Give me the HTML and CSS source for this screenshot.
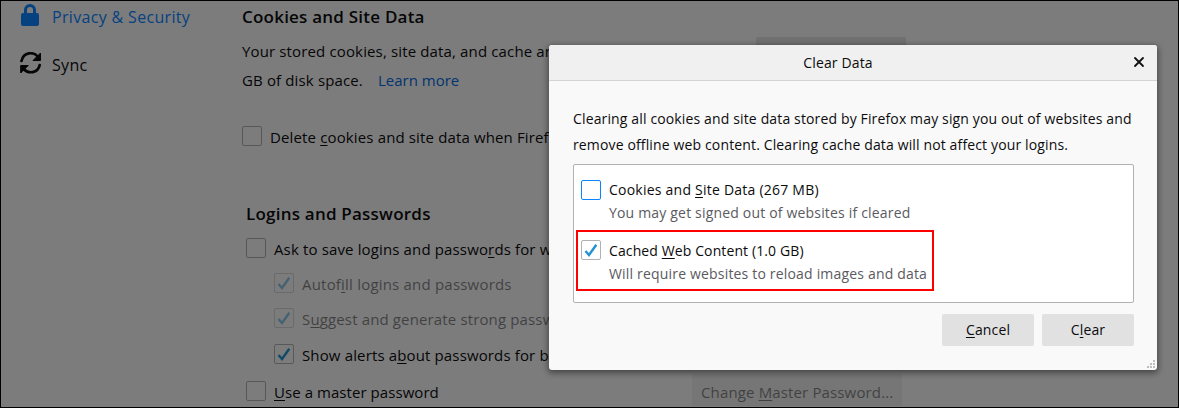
FILE: index.html
```html
<!DOCTYPE html>
<html lang="en">
<head>
<meta charset="utf-8">
<title>Privacy &amp; Security</title>
<link rel="stylesheet" href="styles.css">
</head>
<body>
<div class="page">
  <nav class="sidebar">
    <div class="nav-item active">
      <svg class="nav-icon lock" width="22" height="22" viewBox="-1 0 22 22"><path d="M0 11a2 2 0 0 1 2-2h1V6a6 6 0 0 1 12 0v3h1a2 2 0 0 1 2 2v9a2 2 0 0 1-2 2H2a2 2 0 0 1-2-2zM6 9h6V6a3 3 0 0 0-6 0z" fill="currentColor" fill-rule="evenodd"/></svg>
      <span class="nav-label">Privacy &amp; Security</span>
    </div>
    <div class="nav-item">
      <svg class="nav-icon" width="22" height="22" viewBox="0 0 22 22"><g fill="none" stroke="currentColor" stroke-width="2.7" stroke-linecap="round"><path d="M1.500 9C3.500 0 13.500-.9 18 5"/><path d="M19.700 13C18 21.500 8 22 3.500 17"/></g><path d="M20.500 1v7.500h-7.500zM.700 21v-7.500h7.500z" fill="currentColor" stroke="currentColor" stroke-width="1" stroke-linejoin="round"/></svg>
      <span class="nav-label">Sync</span>
    </div>
  </nav>
  <main class="content">
    <section class="cookies">
      <h2>Cookies and Site Data</h2>
      <div class="storage">
        <div class="storage-text">
          <div>Your stored cookies, site data, and cache are</div>
          <div class="second"><span>GB of disk space.</span><a>Learn more</a></div>
        </div>
        <div class="btn clear-btn"></div>
      </div>
      <div class="check-row delete"><i class="box"></i><span>Delete <u>c</u>ookies and site data when Firef</span></div>
    </section>
    <section class="logins">
      <h2>Logins and Passwords</h2>
      <div class="check-row"><i class="box"></i><span>Ask to save logins and passwo<u>r</u>ds for w</span></div>
      <div class="check-row child disabled r1"><i class="box"><svg width="18" height="18" viewBox="0 0 18 18"><path d="M3.500 10 7 14 14.300 3.800"/></svg></i><span class="t-auto">Autof<u>i</u>ll logins and passwords</span></div>
      <div class="check-row child disabled r2"><i class="box"><svg width="18" height="18" viewBox="0 0 18 18"><path d="M3.500 10 7 14 14.300 3.800"/></svg></i><span>S<u>u</u>ggest and generate strong passw</span></div>
      <div class="check-row child r3"><i class="box"><svg width="18" height="18" viewBox="0 0 18 18"><path d="M3.500 10 7 14 14.300 3.800"/></svg></i><span>Show alerts a<u>b</u>out passwords for b</span></div>
      <div class="master">
        <div class="check-row"><i class="box"></i><span class="t-master"><u>U</u>se a master password</span></div>
        <div class="btn change"><span>Change <u>M</u>aster Password...</span></div>
      </div>
    </section>
  </main>
</div>
<div class="overlay"></div>
<div class="dialog">
  <header class="title"><span>Clear Data</span>
    <svg class="close" width="12" height="12" viewBox="0 0 12 12"><path d="M2 2l8 8M10 2l-8 8" fill="none" stroke="#111" stroke-width="1.800" stroke-linecap="round"/></svg>
  </header>
  <div class="body">
    <div class="message">
      <div>Clearing all cookies and site data stored by Firefox may sign you out of websites and</div>
      <div>remove offline web content. Clearing cache data will not affect your logins.</div>
    </div>
    <div class="list">
      <div class="option first"><i class="box focus"></i><div class="labels"><div class="t-o1">Cookies and <u>S</u>ite Data (267 MB)</div><div class="desc">You may get signed out of websites if cleared</div></div></div>
      <div class="option marked"><i class="box"><svg width="18" height="18" viewBox="0 0 18 18"><path d="M3.500 10 7 14 14.300 3.800"/></svg></i><div class="labels"><div class="t-o2">Cached <u>W</u>eb Content (1.0 GB)</div><div class="desc">Will require websites to reload images and data</div></div></div>
    </div>
    <div class="actions"><div class="action"><u>C</u>ancel</div><div class="action">C<u>l</u>ear</div></div>
  </div>
  <svg class="grip" width="8" height="8" viewBox="0 0 8 8"><path d="M6 0h2v2H6zM3 3h2v2H3zM6 3h2v2H6zM0 6h2v2H0zM3 6h2v2H3zM6 6h2v2H6z" fill="#bdbdbd"/></svg>
</div>
<div class="frame"></div>
</body>
</html>
```
FILE: styles.css
```css
* { box-sizing: border-box; }
body {
  margin: 0;
  width: 1179px;
  height: 408px;
  overflow: hidden;
  position: relative;
  background: #f9f9fa;
  color: #0c0c0d;
  font: 15px/20px "Open Sans", "Noto Sans", sans-serif;
  letter-spacing: .14px;
  white-space: nowrap;
}
u { text-decoration-thickness: 1px; text-underline-offset: 2px; text-decoration-skip-ink: none; }
.page { display: flex; height: 408px; overflow: hidden; }
.sidebar { width: 242px; flex: none; padding: 2px 0 0 20px; }
.nav-item { display: flex; align-items: center; height: 28px; gap: 10px; margin-bottom: 20px; }
.nav-icon { width: 22px; flex: none; margin-top: -3px; }
.nav-item.active { color: #0a84ff; }
.nav-item.active .nav-icon { margin-top: -2px; }
.nav-label { font-size: 16px; letter-spacing: .33px; padding-top: 2px; }
.t-auto { letter-spacing: .2px; }
.t-master { letter-spacing: .06px; }
.content { flex: 1; }
h2 { margin: 0; font-size: 17px; line-height: 24px; font-weight: 600; letter-spacing: .22px; }
.cookies { padding-top: 5px; }
.storage { display: flex; height: 90px; margin-top: 8px; }
.storage-text { width: 514px; flex: none; line-height: 29px; }
.second { display: flex; gap: 15px; }
.second a { color: #0568e0; letter-spacing: 0; }
.btn { background: #e0e0e1; border-radius: 2px; }
.clear-btn { width: 150px; height: 32px; }
.check-row { display: flex; align-items: center; height: 20px; gap: 8px; }
.check-row span { padding-top: 2px; }
.box { display: block; width: 20px; height: 20px; flex: none; border: 1px solid #b1b1b1; border-radius: 2px; }
.box svg { display: block; }
.box path { fill: none; stroke: #2292d0; stroke-width: 2.4; }
.box.focus { border-color: #0a84ff; }
.delete { margin-top: -1px; }
.logins { padding: 56px 0 0 4px; }
.logins h2 { margin-bottom: 12px; }
.child { margin-left: 28px; }
.disabled { opacity: .5; }
.r1, .r2 { margin-top: 15px; }
.r3 { margin-top: 16px; }
.master { display: flex; align-items: flex-start; margin-top: 10px; }
.master .check-row { width: 446px; margin-top: 7px; }
.change { width: 210px; height: 32px; padding: 8px 0 0 9px; opacity: .5; }
.overlay { position: absolute; inset: 0; background: rgba(0, 0, 0, .5); }
.frame { position: absolute; inset: 0; border: 1px solid #000; }
.dialog {
  position: absolute;
  left: 549px;
  top: 45px;
  width: 608px;
  height: 325px;
  background: #f9f9fa;
  border-radius: 3px;
  box-shadow: 0 2px 6px 1px rgba(0, 0, 0, .45);
  font-size: 14px;
}
.title {
  display: flex;
  align-items: center;
  justify-content: center;
  height: 36px;
  padding-right: 30px;
  background: #f0f0f0;
  border-bottom: 1px solid #d4d4d7;
  border-radius: 3px 3px 0 0;
}
.close { position: absolute; left: 584px; top: 11px; }
.body { padding: 25px 23px 0 24px; }
.message { line-height: 26px; height: 58px; }
.list { height: 139px; background: #fff; border: 1px solid #b1b1b1; border-radius: 2px; padding-left: 2px; }
.option { display: flex; gap: 8px; width: 358px; height: 61px; padding-left: 5px; }
.option .labels { line-height: 23px; }
.first { padding-top: 15px; height: 65px; }
.first .labels { margin-top: -2px; }
.marked { border: 2px solid #f00; padding: 8px 0 0 3px; }
.marked .labels { margin-top: -1px; }
.t-o1 { letter-spacing: .23px; }
.t-o2 { letter-spacing: .11px; }
.desc { color: #5a5a5f; letter-spacing: .18px; }
.actions { display: flex; justify-content: flex-end; gap: 8px; margin-top: 11px; }
.action { width: 92px; height: 32px; background: #e1e1e2; border-radius: 2px; text-align: center; line-height: 32px; }
.grip { position: absolute; right: 2px; bottom: 2px; }
```
